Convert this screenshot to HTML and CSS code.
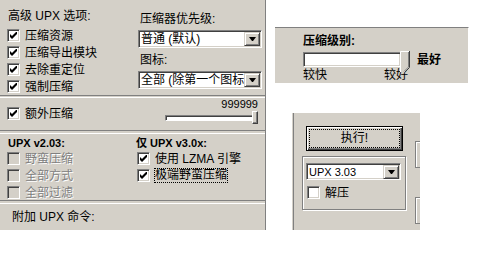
FILE: index.html
```html
<!DOCTYPE html>
<html lang="zh-CN">
<head>
    <meta charset="UTF-8">
    <title>UPX 选项</title>
    <link rel="stylesheet" href="styles.css">
</head>
<body>
    <div class="dialog">
        <div class="left">
            <section class="sec sec-main">
                <div class="opts">
                    <div class="title">高级 UPX 选项:</div>
                    <div class="chk"><span class="box"><svg width="7" height="7" viewBox="0 0 7 7"><polygon points="0,2 2,4 7,-1 7,2 2,7 0,5"/></svg></span>压缩资源</div>
                    <div class="chk"><span class="box"><svg width="7" height="7" viewBox="0 0 7 7"><polygon points="0,2 2,4 7,-1 7,2 2,7 0,5"/></svg></span>压缩导出模块</div>
                    <div class="chk"><span class="box"><svg width="7" height="7" viewBox="0 0 7 7"><polygon points="0,2 2,4 7,-1 7,2 2,7 0,5"/></svg></span>去除重定位</div>
                    <div class="chk"><span class="box"><svg width="7" height="7" viewBox="0 0 7 7"><polygon points="0,2 2,4 7,-1 7,2 2,7 0,5"/></svg></span>强制压缩</div>
                </div>
                <div class="prio">
                    <div class="caption">压缩器优先级:</div>
                    <div class="combo"><span class="combo-text">普通 (默认)</span><span class="combo-btn"></span></div>
                    <div class="caption caption-2">图标:</div>
                    <div class="combo"><span class="combo-text">全部 (除第一个图标</span><span class="combo-btn"></span></div>
                </div>
            </section>

            <section class="sec sec-extra">
                <div class="chk"><span class="box"><svg width="7" height="7" viewBox="0 0 7 7"><polygon points="0,2 2,4 7,-1 7,2 2,7 0,5"/></svg></span>额外压缩</div>
                <div class="extra-level">
                    <div class="num">999999</div>
                    <div class="mini-track">
                        <div class="mini-channel"></div>
                        <div class="mini-thumb"></div>
                    </div>
                </div>
            </section>

            <section class="sec sec-ver">
                <div class="ver-col">
                    <div class="ver-title">UPX v2.03:</div>
                    <div class="chk off"><span class="box"></span>野蛮压缩</div>
                    <div class="chk off"><span class="box"></span>全部方式</div>
                    <div class="chk off"><span class="box"></span>全部过滤</div>
                </div>
                <div class="ver-col ver-col-2">
                    <div class="ver-title">仅 UPX v3.0x:</div>
                    <div class="chk"><span class="box"><svg width="7" height="7" viewBox="0 0 7 7"><polygon points="0,2 2,4 7,-1 7,2 2,7 0,5"/></svg></span>使用 LZMA 引擎</div>
                    <div class="chk"><span class="box"><svg width="7" height="7" viewBox="0 0 7 7"><polygon points="0,2 2,4 7,-1 7,2 2,7 0,5"/></svg></span><span class="focus">极端野蛮压缩</span></div>
                </div>
            </section>

            <section class="sec sec-cmd">附加 UPX 命令:</section>
        </div>

        <div class="right">
            <div class="level-panel">
                <div class="level-title">压缩级别:</div>
                <div class="level-row">
                    <div class="level-track">
                        <div class="level-field"></div>
                        <svg class="level-thumb" width="10" height="22" viewBox="0 0 10 22">
                            <path d="M0.5 21V0.5H9.5V16L4 21.5" fill="#d4d0c8" stroke="#fff"/>
                            <path d="M9.5 0V16.5L4.5 21.5" fill="none" stroke="#404040"/>
                            <path d="M8.5 1V16L4 20.5" fill="none" stroke="#808080"/>
                        </svg>
                    </div>
                    <span class="best">最好</span>
                </div>
                <div class="level-marks"><span>较快</span><span>较好</span></div>
            </div>

            <div class="run-panel">
                <div class="run-col">
                    <div class="run-btn"><span class="run-focus">执行!</span></div>
                    <div class="group">
                        <div class="combo combo-small"><span class="combo-text">UPX 3.03</span><span class="combo-btn"></span></div>
                        <div class="chk"><span class="box"></span>解压</div>
                    </div>
                </div>
                <div class="stubs">
                    <div class="stub"></div>
                    <div class="stub stub-2"></div>
                </div>
            </div>
        </div>
    </div>
</body>
</html>
```

FILE: styles.css
```css
body {
    margin: 0;
    background: #fff;
    color: #000;
    font-family: "Liberation Sans", "Noto Sans CJK SC", sans-serif;
    font-size: 12px;
    line-height: 14px;
}
.dialog {
    display: flex;
    align-items: flex-start;
}

/* left column */
.left {
    width: 266px;
    height: 230px;
    box-sizing: border-box;
    background: #d4d0c8;
    border-right: 1px solid #808080;
    display: flex;
    flex-direction: column;
}
.sec {
    box-sizing: border-box;
    border-top: 1px solid #fff;
    border-bottom: 1px solid #808080;
}
.sec-main {
    height: 96px;
    display: flex;
    border-top: none;
}
.opts {
    width: 131px;
    padding: 9px 0 0 7px;
}
.title {
    padding-left: 1px;
    margin-bottom: 4px;
}
.chk {
    display: flex;
    align-items: center;
    height: 17px;
    white-space: nowrap;
}
.box {
    width: 13px;
    height: 13px;
    box-sizing: border-box;
    flex: none;
    margin-right: 5px;
    background: #fff;
    border: 1px solid;
    border-color: #808080 #fff #fff #808080;
    box-shadow: inset 1px 1px 0 #404040, inset -1px -1px 0 #d4d0c8;
    display: flex;
    align-items: center;
    justify-content: center;
}
.chk.off .box {
    background: #d4d0c8;
}
.chk.off {
    color: #808080;
    text-shadow: 1px 1px 0 #fff;
}
.prio {
    width: 124px;
    padding-top: 12px;
}
.caption {
    padding-left: 2px;
    margin-bottom: 4px;
}
.caption-2 {
    margin-top: 5px;
}
.combo {
    display: flex;
    align-items: center;
    height: 18px;
    box-sizing: border-box;
    padding: 1px;
    background: #fff;
    border: 1px solid;
    border-color: #808080 #fff #fff #808080;
    box-shadow: inset 1px 1px 0 #404040, inset -1px -1px 0 #d4d0c8;
    overflow: hidden;
}
.combo-text {
    flex: 1;
    padding-left: 1px;
    white-space: nowrap;
    overflow: hidden;
}
.combo-btn {
    width: 16px;
    height: 14px;
    box-sizing: border-box;
    flex: none;
    background: #d4d0c8;
    border: 1px solid;
    border-color: #d4d0c8 #404040 #404040 #d4d0c8;
    box-shadow: inset 1px 1px 0 #fff, inset -1px -1px 0 #808080;
    display: flex;
    align-items: center;
    justify-content: center;
}
.combo-btn::after {
    content: "";
    width: 1px;
    border-left: 3px solid transparent;
    border-right: 3px solid transparent;
    border-top: 4px solid #000;
}

.sec-extra {
    height: 34px;
    margin-top: 1px;
    display: flex;
    align-items: flex-start;
    padding: 7px 7px 0 7px;
}
.sec-extra .chk {
    margin-top: 0;
}
.extra-level {
    margin-left: auto;
    display: flex;
    flex-direction: column;
    align-items: flex-end;
    margin-top: -7px;
}
.num {
    font-size: 11px;
    line-height: 13px;
}
.mini-track {
    position: relative;
    width: 93px;
    height: 13px;
}
.mini-channel {
    margin-top: 4px;
    height: 6px;
    box-sizing: border-box;
    background: #fff;
    border: 1px solid;
    border-color: #808080 #fff #fff #808080;
    box-shadow: inset 1px 1px 0 #404040;
}
.mini-thumb {
    position: absolute;
    right: 0;
    top: 0;
    width: 6px;
    height: 13px;
    box-sizing: border-box;
    background: #d4d0c8;
    border: 1px solid;
    border-color: #fff #404040 #404040 #fff;
    box-shadow: inset -1px -1px 0 #808080;
}

.sec-ver {
    height: 68px;
    margin-top: 2px;
    display: flex;
    padding: 3px 0 0 7px;
}
.ver-col {
    width: 128px;
}
.ver-col-2 {
    padding-left: 2px;
}
.ver-title {
    font-weight: bold;
    font-size: 11px;
    line-height: 13px;
    padding-left: 1px;
    margin-bottom: 0;
}
.ver-col-2 .ver-title {
    margin-left: -2px;
}
.focus {
    outline: 1px dotted #000;
    outline-offset: 0;
    line-height: 13px;
}

.sec-cmd {
    flex: 1;
    margin-top: 2px;
    border-bottom: none;
    padding: 6px 0 0 12px;
}

/* right side */
.right {
    display: flex;
    flex-direction: column;
}
.level-panel {
    width: 194px;
    height: 56px;
    box-sizing: border-box;
    margin: 27px 0 0 9px;
    padding: 6px 0 0 28px;
    background: #d4d0c8;
    border-top: 1px solid #808080;
    border-right: 1px solid #fff;
}
.level-title {
    font-weight: bold;
}
.level-row {
    display: flex;
    align-items: center;
    margin-top: 3px;
    height: 17px;
}
.level-track {
    position: relative;
    width: 106px;
    height: 15px;
}
.level-field {
    width: 98px;
    height: 15px;
    box-sizing: border-box;
    background: #fff;
    border: 1px solid;
    border-color: #808080 #fff #fff #808080;
    box-shadow: inset 1px 1px 0 #404040, inset -1px -1px 0 #d4d0c8;
}
.level-thumb {
    position: absolute;
    right: -1px;
    top: -1px;
}
.best {
    margin-left: 8px;
    font-weight: bold;
}
.level-marks {
    width: 105px;
    display: flex;
    justify-content: space-between;
}

.run-panel {
    width: 128px;
    height: 117px;
    margin: 30px 0 0 26px;
    box-sizing: border-box;
    padding-left: 10px;
    display: flex;
    background: #d4d0c8;
    box-shadow: inset 1px 0 0 #d4d0c8, inset 2px 0 0 #808080;
}
.run-col {
    width: 104px;
    padding-top: 13px;
}
.run-btn {
    width: 97px;
    height: 25px;
    margin-left: 4px;
    box-sizing: border-box;
    border: 1px solid #000;
    background: #d4d0c8;
    box-shadow: inset 1px 1px 0 #fff, inset -1px -1px 0 #404040, inset -2px -2px 0 #808080;
    padding: 3px;
    display: flex;
}
.run-focus {
    flex: 1;
    outline: 1px dotted #000;
    text-align: center;
    line-height: 17px;
}
.group {
    margin-top: 5px;
    height: 54px;
    box-sizing: border-box;
    padding: 6px 0 0 3px;
    border: 1px solid #808080;
    box-shadow: inset 1px 1px 0 #fff, 1px 1px 0 #fff;
}
.combo-small {
    width: 95px;
    height: 17px;
    margin-bottom: 4px;
    font-size: 11px;
}
.group .chk {
    padding-left: 1px;
}
.stubs {
    margin-left: 9px;
    padding-top: 28px;
}
.stub {
    width: 5px;
    height: 27px;
    box-sizing: border-box;
    border: 1px solid #808080;
    border-right: none;
    box-shadow: inset 1px 1px 0 #fff;
}
.stub-2 {
    margin-top: 29px;
}
```
